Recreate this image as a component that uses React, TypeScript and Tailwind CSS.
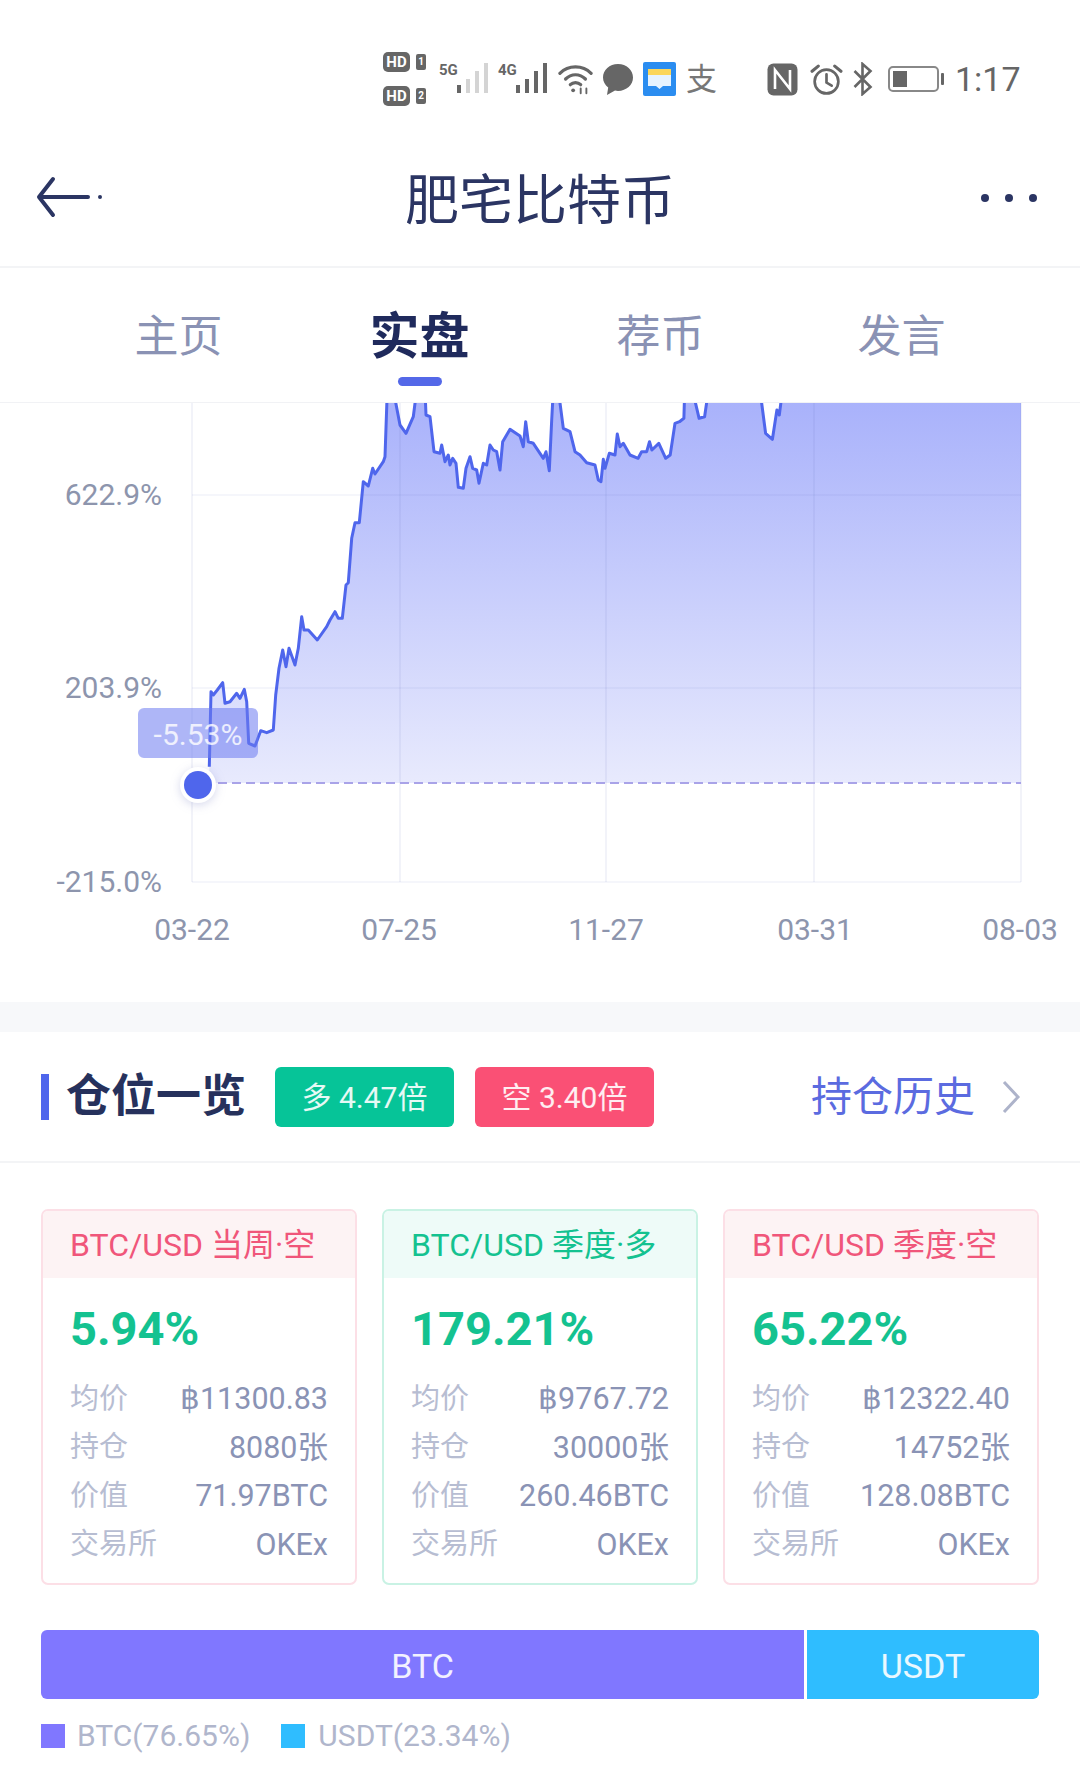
const left = [
  [238, 1100], [243, 875], [250, 885], [262, 870], [278, 848], [285, 910], [300, 905], [320, 880], [330, 895], [343, 868],
  [350, 905], [356, 1030], [375, 1038], [392, 992], [410, 998], [430, 990], [437, 885], [447, 805], [458, 750], [468, 800],
  [477, 745], [495, 795], [505, 745], [515, 650], [522, 690], [535, 690], [562, 720], [590, 680], [600, 660], [615, 635],
  [625, 655], [637, 655], [648, 555], [655, 548], [665, 415], [675, 368], [688, 368], [700, 245], [715, 258], [728, 205],
  [735, 222], [760, 185], [765, 170], [772, -30], [790, -30], [810, 75], [828, 100], [850, 50], [860, -30], [885, -30],
  [888, 45], [900, 50], [912, 155], [930, 160], [935, 135], [945, 185], [955, 165], [960, 195], [968, 175], [978, 190],
  [985, 262], [1000, 265], [1008, 205], [1020, 170], [1028, 205], [1040, 210], [1047, 250], [1060, 190], [1070, 195], [1080, 135],
  [1090, 150], [1100, 155], [1110, 210], [1118, 125], [1140, 88], [1170, 108], [1180, 140], [1187, 65], [1195, 125], [1210, 130],
  [1240, 175], [1248, 155], [1258, 212], [1265, 60], [1270, -30], [1285, -30], [1300, 85], [1320, 95], [1335, 155], [1350, 165],
  [1370, 188], [1395, 195], [1405, 240], [1413, 245], [1420, 178], [1425, 205], [1438, 160], [1455, 165], [1462, 102], [1470, 140],
  [1480, 130], [1500, 165],
].map(([x, y]) => [130 + x / 3, 400 + y / 3]);

const right = [
  [285, 205], [295, 185], [310, 185], [318, 155], [325, 180], [345, 160], [365, 205], [378, 195], [392, 100], [405, 95],
  [418, 85], [420, 10], [445, 10], [462, 85], [478, 80], [488, 10], [640, 10], [655, 130], [675, 148], [688, 60],
  [695, 75], [703, 10],
].map(([x, y]) => [540 + x / 2.904, 390 + y / 3]);

const curve = [...left, ...right];
const linePath = curve.map(([x, y], i) => `${i ? "L" : "M"}${x.toFixed(1)} ${y.toFixed(1)}`).join(" ");
const fillPath = `${linePath} L1021 393 L1021 783 L209 783 Z`;

const yLabels = [
  { label: "622.9%", y: 495 },
  { label: "203.9%", y: 688 },
  { label: "-215.0%", y: 882 },
];
const xLabels = [
  { label: "03-22", x: 192 },
  { label: "07-25", x: 399 },
  { label: "11-27", x: 606 },
  { label: "03-31", x: 815 },
  { label: "08-03", x: 1020 },
];

const cards = [
  {
    title: "BTC/USD 当周·空",
    tone: "short",
    pct: "5.94%",
    rows: [["均价", "฿11300.83"], ["持仓", "8080张"], ["价值", "71.97BTC"], ["交易所", "OKEx"]],
  },
  {
    title: "BTC/USD 季度·多",
    tone: "long",
    pct: "179.21%",
    rows: [["均价", "฿9767.72"], ["持仓", "30000张"], ["价值", "260.46BTC"], ["交易所", "OKEx"]],
  },
  {
    title: "BTC/USD 季度·空",
    tone: "short",
    pct: "65.22%",
    rows: [["均价", "฿12322.40"], ["持仓", "14752张"], ["价值", "128.08BTC"], ["交易所", "OKEx"]],
  },
];

function HdBadge({ n }: { n: string }) {
  return (
    <div className="flex items-center gap-[6px]">
      <span className="flex h-[20px] w-[27px] items-center justify-center rounded-[5px] bg-[#666] text-[15px] leading-none font-bold text-white">
        HD
      </span>
      <span className="flex h-[16px] w-[10px] items-center justify-center rounded-[2px] bg-[#666] text-[10px] leading-none font-bold text-white">
        {n}
      </span>
    </div>
  );
}

function Signal({ net, dim }: { net: string; dim?: boolean }) {
  const heights = [8, 14, 22, 30];
  return (
    <div className="relative h-[36px] w-[49px]">
      <span className="absolute top-[2px] left-0 text-[15px] leading-none font-bold text-[#666]">{net}</span>
      <div className="absolute right-0 bottom-[4px] flex items-end gap-[5px]">
        {heights.map((h, i) => (
          <span
            key={i}
            className={i > 0 && dim ? "w-[4px] bg-[#d4d4d4]" : "w-[4px] bg-[#666]"}
            style={{ height: h }}
          />
        ))}
      </div>
    </div>
  );
}

function StatusBar() {
  return (
    <div className="flex h-[130px] items-center pt-[28px] pl-[383px]">
      <div className="flex flex-col gap-[14px]">
        <HdBadge n="1" />
        <HdBadge n="2" />
      </div>
      <div className="ml-[13px]">
        <Signal net="5G" dim />
      </div>
      <div className="ml-[10px]">
        <Signal net="4G" />
      </div>
      <svg className="ml-[11px]" width="35" height="32" viewBox="0 0 37 32" fill="none" stroke="#666" strokeWidth="3.4" strokeLinecap="round">
        <path d="M2 10C11 1 26 1 35 10" />
        <path d="M8 16C14 10 23 10 29 16" />
        <path d="M13 22C16 19 21 19 24 22" />
        <circle cx="16" cy="28" r="2" fill="#666" stroke="none" />
        <path d="M24 26v5M30 26v5" strokeWidth="2" />
      </svg>
      <svg className="ml-[9px]" width="32" height="33" viewBox="0 0 32 33" fill="#666">
        <path d="M16 1C7.5 1 1 7 1 14.5c0 4 2 7.6 5.2 10L5 32l8-4.4c1 .2 2 .3 3 .3 8.5 0 15-6 15-13.4S24.5 1 16 1z" />
      </svg>
      <svg className="ml-[9px]" width="33" height="34" viewBox="0 0 33 34">
        <rect width="33" height="34" rx="2" fill="#2b8df0" />
        <rect x="5" y="7" width="23" height="6" fill="#fbd65a" />
        <path d="M5 13h23v11h-8l-3.5 3-3.5-3H5z" fill="#e6f3ff" />
      </svg>
      <span className="ml-[10px] w-[33px] text-[31px] leading-none text-[#777]">支</span>
      <svg className="ml-[48px]" width="31" height="33" viewBox="0 0 31 33" fill="none">
        <rect x="0.5" y="0.5" width="30" height="32" rx="6" fill="#666" />
        <path d="M8 26V7l15 19V7" stroke="#fff" strokeWidth="2.6" />
      </svg>
      <svg className="ml-[12px]" width="33" height="33" viewBox="0 0 32 32" fill="none" stroke="#666" strokeWidth="2.6" strokeLinecap="round">
        <circle cx="16" cy="18" r="11.5" />
        <path d="M16 11v8l5 3" />
        <path d="M2 8l6-5M30 8l-6-5" strokeWidth="3" />
      </svg>
      <svg className="ml-[9px]" width="21" height="34" viewBox="0 0 20 34" fill="none" stroke="#666" strokeWidth="2.6">
        <path d="M2 9l16 16-8 7V2l8 7L2 25" />
      </svg>
      <div className="ml-[15px] flex items-center gap-[2px]">
        <div className="flex h-[26px] w-[51px] rounded-[5px] border-2 border-[#888] p-[3px]">
          <span className="w-[14px] bg-[#666]" />
        </div>
        <span className="h-[12px] w-[3px] rounded-[1px] bg-[#666]" />
      </div>
      <span className="ml-[11px] text-[34px] leading-none text-[#666]">1:17</span>
    </div>
  );
}

function Header() {
  return (
    <div className="relative flex h-[138px] items-center justify-center border-b-2 border-[#f3f4f6] pt-[8px]">
      <svg className="absolute top-[46px] left-[36px]" width="68" height="42" viewBox="0 0 68 42" fill="none" stroke="#2b3563" strokeWidth="4" strokeLinecap="round" strokeLinejoin="round">
        <path d="M52 21H4M17 3L3 21l14 18" />
        <circle cx="64" cy="21" r="1" strokeWidth="2" />
      </svg>
      <h1 className="text-[54px] leading-none font-normal text-[#2b3563]">肥宅比特币</h1>
      <div className="absolute top-[64px] right-[43px] flex gap-[16px]">
        <span className="size-[8px] rounded-full bg-[#2b3563]" />
        <span className="size-[8px] rounded-full bg-[#2b3563]" />
        <span className="size-[8px] rounded-full bg-[#2b3563]" />
      </div>
    </div>
  );
}

function Tabs() {
  const tabs = ["主页", "实盘", "荐币", "发言"];
  return (
    <div className="grid grid-cols-4 border-b border-[#f1f2f5] px-[58px] pt-[45px] pb-[16px]">
      {tabs.map((tab, i) => (
        <div key={tab} className="flex flex-col items-center">
          <span className={i === 1 ? "h-[48px] text-[50px] leading-[48px] font-bold text-[#1f2a5c]" : "h-[48px] text-[44px] leading-[48px] text-[#8a92b4]"}>
            {tab}
          </span>
          <span className={i === 1 ? "mt-4 h-[9px] w-[44px] rounded-full bg-[#5468e8]" : "mt-4 h-[9px]"} />
        </div>
      ))}
    </div>
  );
}

function Chart() {
  return (
    <div className="relative">
      <svg className="block" width="1080" height="599" viewBox="0 403 1080 599">
        <defs>
          <linearGradient id="area" x1="0" y1="403" x2="0" y2="783" gradientUnits="userSpaceOnUse">
            <stop offset="0" stopColor="#a9b2fb" />
            <stop offset="1" stopColor="#e8eafd" />
          </linearGradient>
        </defs>
        <path d={fillPath} fill="url(#area)" />
        <path d={linePath} fill="none" stroke="#4f66ec" strokeWidth="3" strokeLinejoin="round" />
        {[192, 400, 606, 814, 1021].map((x) => (
          <line key={x} x1={x} x2={x} y1={403} y2={882} stroke="#5a66b8" strokeOpacity="0.08" strokeWidth="2" />
        ))}
        {yLabels.map((t) => (
          <line key={t.y} x1={192} x2={1021} y1={t.y} y2={t.y} stroke="#5a66b8" strokeOpacity="0.06" strokeWidth="2" />
        ))}
        <line x1={218} x2={1021} y1={783} y2={783} stroke="#a9a3e8" strokeWidth="2" strokeDasharray="9 5" />
        {yLabels.map((t) => (
          <text key={t.label} x={162} y={t.y + 10} textAnchor="end" fontSize="30" fill="#8d95ad">
            {t.label}
          </text>
        ))}
        {xLabels.map((t) => (
          <text key={t.label} x={t.x} y={940} textAnchor="middle" fontSize="30" fill="#8d95ad">
            {t.label}
          </text>
        ))}
        <circle cx="198" cy="785" r="18" fill="#fff" style={{ filter: "drop-shadow(0 2px 5px rgba(90,100,180,.25))" }} />
        <circle cx="198" cy="785" r="14" fill="#4f66ec" />
      </svg>
      <div className="absolute top-[305px] left-[138px] flex h-[50px] w-[120px] items-center justify-center rounded-[6px] bg-[#6b7af0]/55 pt-[2px] text-[30px] text-white/80">
        -5.53%
      </div>
    </div>
  );
}

function SectionHeader() {
  return (
    <div className="flex h-[131px] items-center border-b-2 border-[#f3f4f6] pr-[59px] pl-[41px]">
      <span className="h-[46px] w-[8px] bg-[#4f66ec]" />
      <h2 className="ml-[17px] text-[45px] leading-none font-bold text-[#26315c]">仓位一览</h2>
      <span className="ml-[29px] flex h-[60px] w-[179px] items-center justify-center rounded-[6px] bg-[#06c498] pt-[2px] text-[30px] text-white/90">
        多 4.47倍
      </span>
      <span className="ml-[21px] flex h-[60px] w-[179px] items-center justify-center rounded-[6px] bg-[#fa5075] pt-[2px] text-[30px] text-white/90">
        空 3.40倍
      </span>
      <span className="ml-auto pt-[2px] text-[41px] leading-none text-[#5b6be0]">持仓历史</span>
      <svg className="ml-[26px]" width="20" height="36" viewBox="0 0 20 36" fill="none" stroke="#adb3ca" strokeWidth="3">
        <path d="M3 3l14 15L3 33" />
      </svg>
    </div>
  );
}

function PositionCard({ card }: { card: (typeof cards)[number] }) {
  const short = card.tone === "short";
  return (
    <div className={short ? "overflow-hidden rounded-[7px] border-2 border-[#fcdfe6]" : "overflow-hidden rounded-[7px] border-2 border-[#c9f2e4]"}>
      <div className={short ? "flex h-[67px] items-center bg-[#fdf3f4] pl-[27px] text-[32px] text-[#f0567a]" : "flex h-[67px] items-center bg-[#eefbf8] pl-[27px] text-[32px] text-[#14c290]"}>
        {card.title}
      </div>
      <div className="px-[27px] pt-[23px] pb-[14px]">
        <div className="h-[56px] text-[47px] leading-[56px] font-bold text-[#14c290]">{card.pct}</div>
        <div className="mt-[18px] flex flex-col">
          {card.rows.map(([label, value]) => (
            <div key={label} className="flex h-[48.5px] items-center justify-between">
              <span className="text-[29px] text-[#b7bdd2]">{label}</span>
              <span className="text-[30.5px] text-[#8a93b5]">{value}</span>
            </div>
          ))}
        </div>
      </div>
    </div>
  );
}

export default function App() {
  return (
    <div className="h-[1784px] w-[1080px] overflow-hidden bg-white font-[Roboto,'Noto_Sans_CJK_SC',sans-serif]">
      <StatusBar />
      <Header />
      <Tabs />
      <Chart />
      <div className="h-[30px] bg-[#f7f8fa]" />
      <SectionHeader />
      <div className="grid grid-cols-3 gap-[25px] px-[41px] pt-[46px]">
        {cards.map((card) => (
          <PositionCard key={card.title} card={card} />
        ))}
      </div>
      <div className="mx-[41px] mt-[45px] flex h-[69px] gap-[3px] overflow-hidden rounded-[6px] pt-0 text-[34px] text-white/90">
        <div className="flex w-[763px] items-center justify-center bg-[#8077ff] pt-[3px]">BTC</div>
        <div className="flex flex-1 items-center justify-center bg-[#2fbdff] pt-[3px]">USDT</div>
      </div>
      <div className="mt-[22px] flex items-center pl-[41px] text-[30px] leading-none text-[#b0b6cc]">
        <span className="size-[24px] bg-[#8077ff]" />
        <span className="ml-[12px]">BTC(76.65%)</span>
        <span className="ml-[31px] size-[24px] bg-[#2fbdff]" />
        <span className="ml-[13px]">USDT(23.34%)</span>
      </div>
    </div>
  );
}
